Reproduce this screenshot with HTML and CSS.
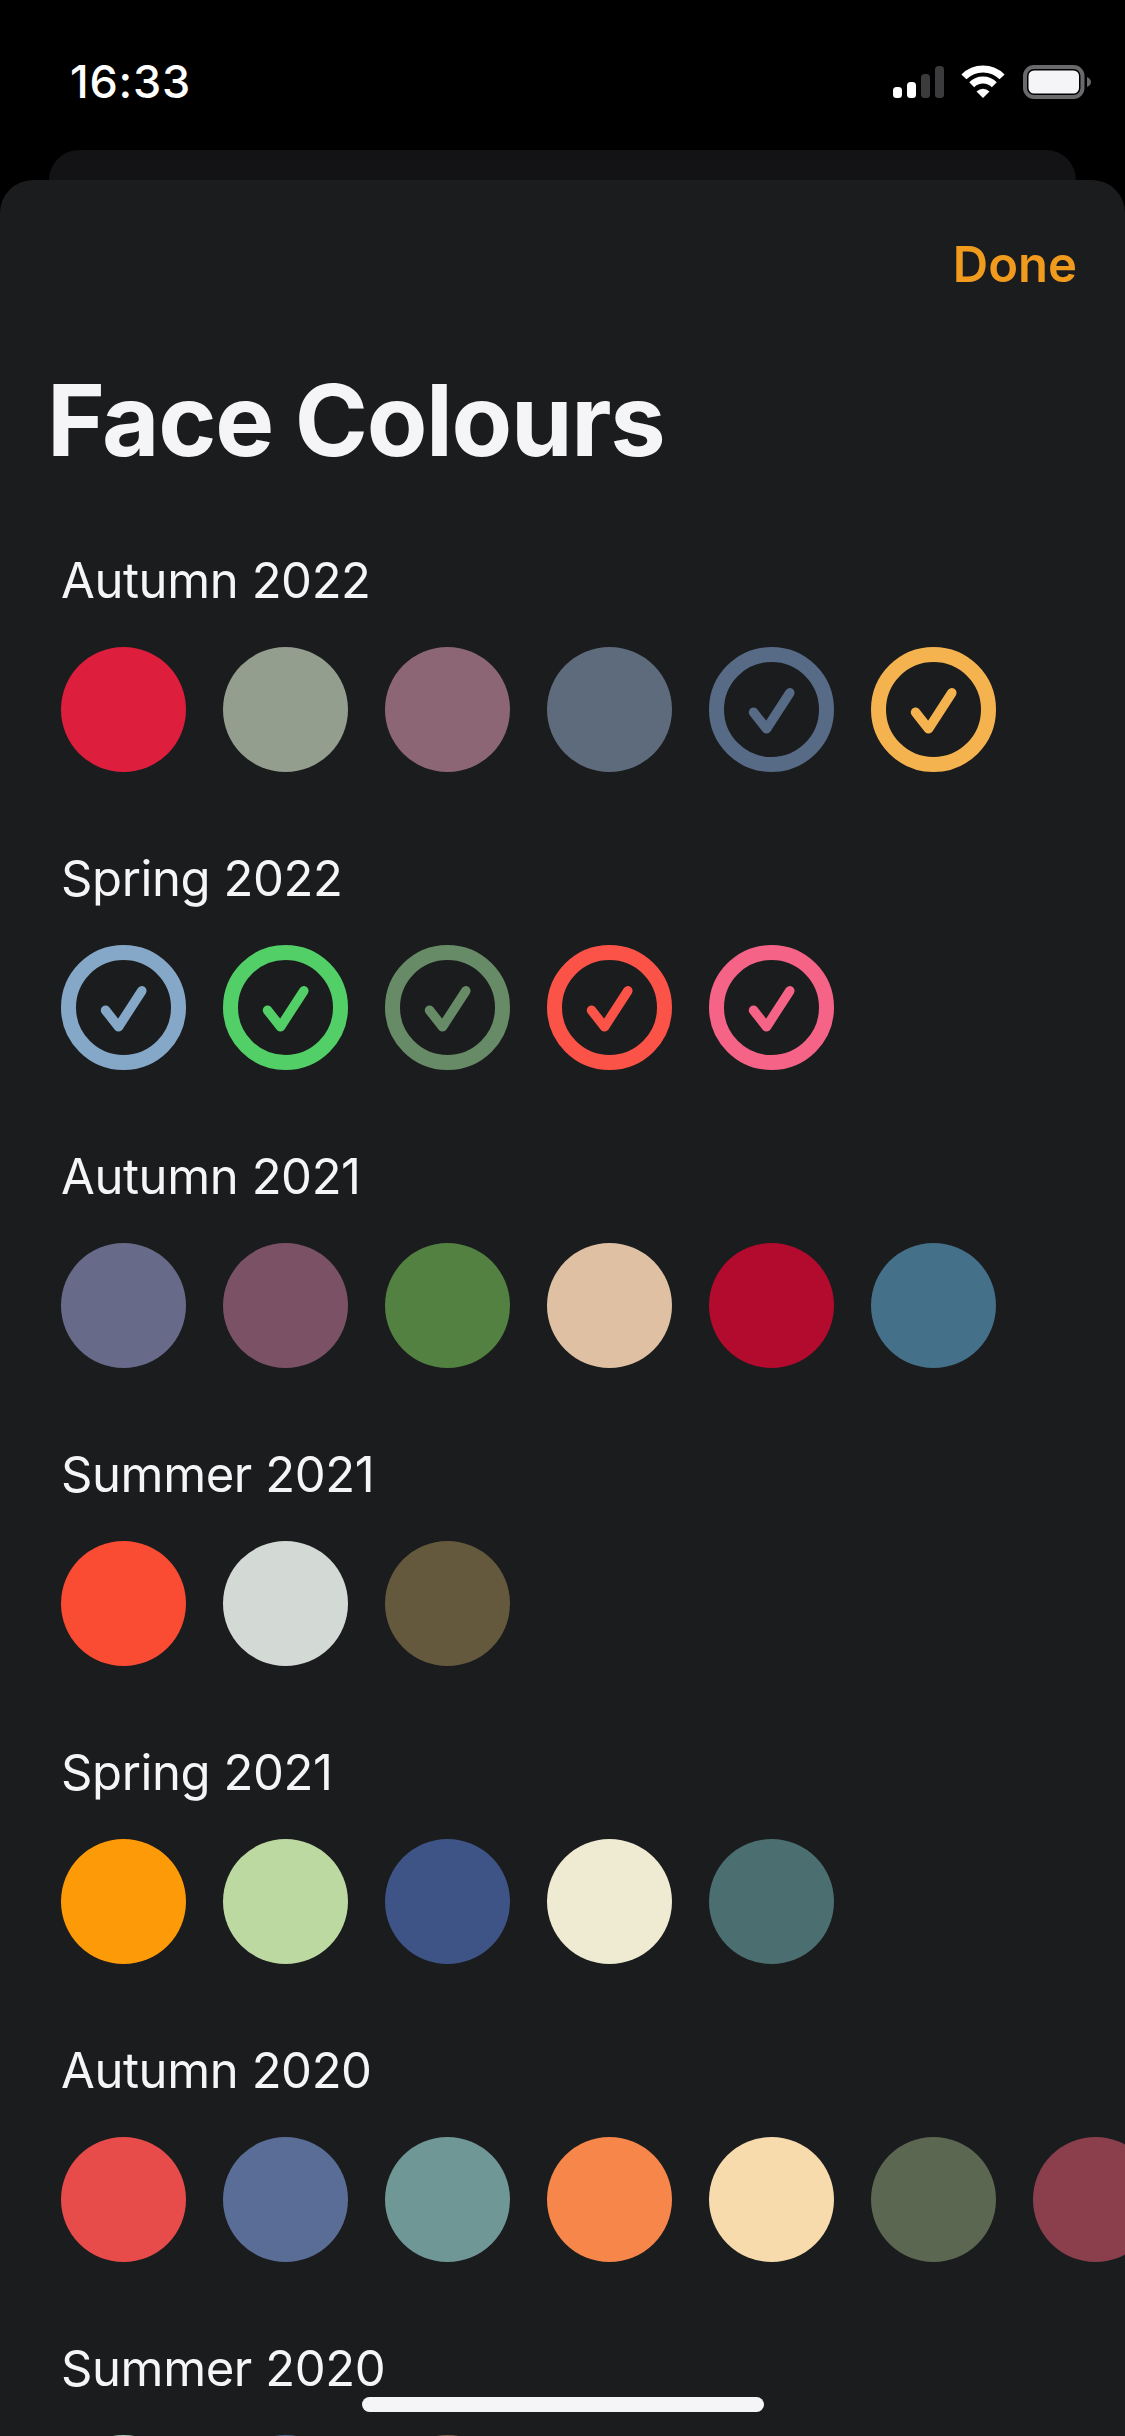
FILE: index.html
```html
<!DOCTYPE html>
<html lang="en">
<head>
    <meta charset="UTF-8">
    <meta name="viewport" content="width=device-width, initial-scale=1.0">
    <title>Face Colours</title>
    <link rel="stylesheet" href="styles.css">
</head>
<body>

    <!-- status bar -->
    <div class="status-bar">
        <span class="time">16:33</span>
        <div class="status-icons">
            <svg class="icon-signal" width="51" height="32" viewBox="0 0 51 32">
                <rect x="0" y="21" width="9" height="11" rx="3.5" fill="#fff"/>
                <rect x="14" y="16" width="9" height="16" rx="3.5" fill="#fff"/>
                <rect x="28" y="8" width="9" height="24" rx="3.5" fill="#3b3b3d"/>
                <rect x="42" y="0" width="9" height="32" rx="3.5" fill="#3b3b3d"/>
            </svg>
            <svg class="icon-wifi" width="46" height="33" viewBox="0 0 46 33">
                <path d="M3.9 11.9A27 27 0 0 1 42.1 11.9" fill="none" stroke="#fff" stroke-width="7"/>
                <path d="M11.7 19.7A16 16 0 0 1 34.3 19.7" fill="none" stroke="#fff" stroke-width="7"/>
                <path d="M23 33L16.5 26.5Q23 21 29.5 26.5Z" fill="#fff"/>
            </svg>
            <svg class="icon-battery" width="68" height="34" viewBox="0 0 68 34">
                <rect x="2" y="2" width="57.5" height="30" rx="9" fill="none" stroke="#6a6a6c" stroke-width="4"/>
                <rect x="5.5" y="5.5" width="50.5" height="23" rx="5.5" fill="#f5f5f7"/>
                <path d="M64 12C66.5 13 68 15 68 17C68 19 66.5 21 64 22Z" fill="#6a6a6c"/>
            </svg>
        </div>
    </div>

    <div class="sheet-back"></div>

    <div class="sheet">
        <div class="sheet-nav">
            <span class="done">Done</span>
        </div>
        <h1 class="title">Face Colours</h1>

        <div class="season">
            <div class="season-name">Autumn 2022</div>
            <div class="swatches">
                <div class="swatch c-crimson"></div>
                <div class="swatch c-sage"></div>
                <div class="swatch c-mauve"></div>
                <div class="swatch c-slate"></div>
                <div class="swatch selected c-steel"><svg class="tick" viewBox="-47.5 -47.5 95 95"><path d="M-18 2.7L-5 19.3L18.3-16.7"/></svg></div>
                <div class="swatch selected c-marigold"><svg class="tick" viewBox="-47.5 -47.5 95 95"><path d="M-18 2.7L-5 19.3L18.3-16.7"/></svg></div>
            </div>
        </div>

        <div class="season">
            <div class="season-name">Spring 2022</div>
            <div class="swatches">
                <div class="swatch selected c-sky"><svg class="tick" viewBox="-47.5 -47.5 95 95"><path d="M-18 2.7L-5 19.3L18.3-16.7"/></svg></div>
                <div class="swatch selected c-green"><svg class="tick" viewBox="-47.5 -47.5 95 95"><path d="M-18 2.7L-5 19.3L18.3-16.7"/></svg></div>
                <div class="swatch selected c-fern"><svg class="tick" viewBox="-47.5 -47.5 95 95"><path d="M-18 2.7L-5 19.3L18.3-16.7"/></svg></div>
                <div class="swatch selected c-coral"><svg class="tick" viewBox="-47.5 -47.5 95 95"><path d="M-18 2.7L-5 19.3L18.3-16.7"/></svg></div>
                <div class="swatch selected c-pink"><svg class="tick" viewBox="-47.5 -47.5 95 95"><path d="M-18 2.7L-5 19.3L18.3-16.7"/></svg></div>
            </div>
        </div>

        <div class="season">
            <div class="season-name">Autumn 2021</div>
            <div class="swatches">
                <div class="swatch c-lilac"></div>
                <div class="swatch c-plum"></div>
                <div class="swatch c-moss"></div>
                <div class="swatch c-sand"></div>
                <div class="swatch c-cherry"></div>
                <div class="swatch c-teal"></div>
            </div>
        </div>

        <div class="season">
            <div class="season-name">Summer 2021</div>
            <div class="swatches">
                <div class="swatch c-vermilion"></div>
                <div class="swatch c-mist"></div>
                <div class="swatch c-olive"></div>
            </div>
        </div>

        <div class="season">
            <div class="season-name">Spring 2021</div>
            <div class="swatches">
                <div class="swatch c-orange"></div>
                <div class="swatch c-pistachio"></div>
                <div class="swatch c-navy"></div>
                <div class="swatch c-cream"></div>
                <div class="swatch c-pine"></div>
            </div>
        </div>

        <div class="season">
            <div class="season-name">Autumn 2020</div>
            <div class="swatches">
                <div class="swatch c-tomato"></div>
                <div class="swatch c-denim"></div>
                <div class="swatch c-lagoon"></div>
                <div class="swatch c-apricot"></div>
                <div class="swatch c-wheat"></div>
                <div class="swatch c-forest"></div>
                <div class="swatch c-wine"></div>
            </div>
        </div>

        <div class="season">
            <div class="season-name">Summer 2020</div>
            <div class="swatches">
                <div class="swatch c-dew"></div>
                <div class="swatch c-dusk"></div>
                <div class="swatch c-umber"></div>
            </div>
        </div>
    </div>

    <div class="home-bar"></div>

</body>
</html>
```

FILE: styles.css
```css
* { box-sizing: border-box; }
html, body { margin: 0; padding: 0; }
body {
    width: 1125px;
    height: 2436px;
    overflow: hidden;
    position: relative;
    display: flex;
    flex-direction: column;
    background-color: #000;
    color: #fff;
    font-family: Inter, "Liberation Sans", sans-serif;
}

/* status bar */
.status-bar {
    flex: none;
    height: 150px;
    padding: 65px 34px 0 70px;
    display: flex;
    justify-content: space-between;
    align-items: flex-start;
}
.time { font-size: 45px; font-weight: 500; letter-spacing: 0.8px; line-height: 33px; }
.status-icons { display: flex; align-items: flex-start; }
.icon-signal { margin-top: 1px; }
.icon-wifi { margin-left: 16px; }
.icon-battery { margin-left: 17px; }

/* sheets */
.sheet-back {
    flex: none;
    height: 30px;
    margin: 0 49px;
    background-color: #131315;
    border-radius: 32px 32px 0 0;
}
.sheet {
    flex: 1;
    min-height: 0;
    overflow: hidden;
    background-color: #1b1c1e;
    border-radius: 33px 33px 0 0;
}
.sheet-nav {
    height: 105px;
    padding: 60px 48px 0 0;
    display: flex;
    justify-content: flex-end;
}
.done { font-size: 49px; font-weight: 600; line-height: 50px; color: #f09a1e; }
.title {
    margin: 80px 0 0;
    padding-left: 47px;
    height: 185px;
    font-size: 99px;
    font-weight: 700;
    letter-spacing: -1.35px;
    line-height: 110px;
    color: #f5f5f7;
}

/* colour rows */
.season { height: 298px; padding-left: 61px; }
.season-name {
    height: 97px;
    font-size: 49px;
    letter-spacing: -0.4px;
    line-height: 62px;
    color: #f5f5f7;
}
.swatches { display: flex; gap: 37px; }
.swatch {
    flex: none;
    width: 125px;
    height: 125px;
    border-radius: 50%;
    background-color: currentColor;
}
.swatch.selected {
    background-color: transparent;
    border: 15px solid currentColor;
}
.tick { display: block; width: 95px; height: 95px; }
.tick path {
    fill: none;
    stroke: currentColor;
    stroke-width: 9.5;
    stroke-linecap: round;
    stroke-linejoin: round;
}

.c-crimson { color: #dd1e3c; }
.c-sage { color: #939e8e; }
.c-mauve { color: #8c6675; }
.c-slate { color: #5e6b7c; }
.c-steel { color: #576a86; }
.c-marigold { color: #f5b34f; }
.c-sky { color: #86a8c8; }
.c-green { color: #53cf68; }
.c-fern { color: #678b66; }
.c-coral { color: #fb5347; }
.c-pink { color: #f56487; }
.c-lilac { color: #686a89; }
.c-plum { color: #7b5166; }
.c-moss { color: #538141; }
.c-sand { color: #dfc0a2; }
.c-cherry { color: #b30b2d; }
.c-teal { color: #44708a; }
.c-vermilion { color: #fa4b33; }
.c-mist { color: #d3d9d4; }
.c-olive { color: #65593d; }
.c-orange { color: #fd9a07; }
.c-pistachio { color: #bcd9a1; }
.c-navy { color: #3e5386; }
.c-cream { color: #efead2; }
.c-pine { color: #4b6f71; }
.c-tomato { color: #e84c4a; }
.c-denim { color: #5a6d97; }
.c-lagoon { color: #6f9796; }
.c-apricot { color: #f68649; }
.c-wheat { color: #f7dbac; }
.c-forest { color: #5b6750; }
.c-wine { color: #8b3f4c; }
.c-dew { color: #a9c9b6; }
.c-dusk { color: #4d6488; }
.c-umber { color: #7a6350; }

/* home indicator sits over the list */
.home-bar {
    position: absolute;
    left: 362px;
    top: 2397px;
    width: 402px;
    height: 15px;
    border-radius: 8px;
    background-color: #f5f5f7;
}
```
